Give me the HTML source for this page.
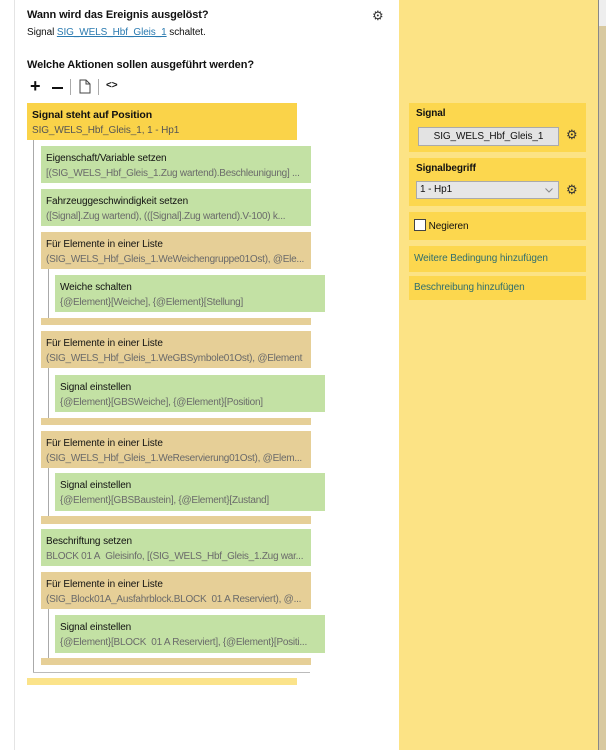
<!DOCTYPE html><html><head><meta charset="utf-8"><style>
body{margin:0;width:606px;height:750px;position:relative;overflow:hidden;background:#fff;font-family:"Liberation Sans",sans-serif;font-size:10px;color:#111;letter-spacing:-0.1px}
.a{position:absolute}
.b{position:absolute;box-sizing:border-box;padding:5px 0 0 5px;line-height:15px;white-space:nowrap;overflow:hidden}
.g{background:#c3e1a4}.t{background:#e6cf97}
.s{color:#6a6a6a;letter-spacing:-0.25px}
.box{position:absolute;left:409px;width:177px;background:#fcd74e;box-sizing:border-box;padding:5px 0 0 7px}
.gear{position:absolute;font-size:13px;color:#333}
</style></head><body>
<div class="a" style="left:14px;top:0;width:1px;height:750px;background:#e4e4e4"></div>
<div class="a" style="left:27px;top:9px;font-weight:bold;font-size:11px">Wann wird das Ereignis ausgelöst?</div>
<div class="a" style="left:27px;top:27px">Signal <span style="color:#2a7ab0;text-decoration:underline">SIG_WELS_Hbf_Gleis_1</span> schaltet.</div>
<div class="gear" style="left:372px;top:8px">⚙</div>
<div class="a" style="left:27px;top:59px;font-weight:bold;font-size:11px">Welche Aktionen sollen ausgeführt werden?</div>
<div class="a" style="left:30px;top:76px;font-size:18px;font-weight:bold">+</div>
<div class="a" style="left:52px;top:87px;width:11px;height:2px;background:#111"></div>
<div class="a" style="left:70px;top:79px;width:1px;height:16px;background:#aaa"></div>
<svg class="a" style="left:79px;top:79px" width="12" height="15"><path d="M1 1H7L11 5V14H1Z M7 1V5H11" fill="none" stroke="#444"/></svg>
<div class="a" style="left:98px;top:79px;width:1px;height:16px;background:#aaa"></div>
<div class="a" style="left:106px;top:80px;font-size:10px;font-weight:bold">&lt;&gt;</div>
<div class="b" style="left:27px;top:103px;width:270px;height:37px;background:#fad349;padding-left:5px"><b style="font-size:10.5px">Signal steht auf Position</b><br><span style="color:#555">SIG_WELS_Hbf_Gleis_1, 1 - Hp1</span></div>
<div class="a" style="left:33px;top:140px;width:1px;height:532px;background:#aaa"></div>
<div class="a" style="left:33px;top:672px;width:277px;height:1px;background:#bbb"></div>
<div class="b g" style="left:41px;top:146px;width:270px;height:37px">Eigenschaft/Variable setzen<br><span class="s">[(SIG_WELS_Hbf_Gleis_1.Zug wartend).Beschleunigung] ...</span></div>
<div class="b g" style="left:41px;top:189px;width:270px;height:37px">Fahrzeuggeschwindigkeit setzen<br><span class="s">([Signal].Zug wartend), (([Signal].Zug wartend).V-100) k...</span></div>
<div class="b t" style="left:41px;top:232px;width:270px;height:37px">Für Elemente in einer Liste<br><span class="s">(SIG_WELS_Hbf_Gleis_1.WeWeichengruppe01Ost), @Ele...</span></div>
<div class="a" style="left:48px;top:269px;width:1px;height:49px;background:#aaa"></div>
<div class="b g" style="left:55px;top:275px;width:270px;height:37px">Weiche schalten<br><span class="s">{@Element}[Weiche], {@Element}[Stellung]</span></div>
<div class="a t" style="left:41px;top:318px;width:270px;height:7px"></div>
<div class="b t" style="left:41px;top:331px;width:270px;height:37px">Für Elemente in einer Liste<br><span class="s">(SIG_WELS_Hbf_Gleis_1.WeGBSymbole01Ost), @Element</span></div>
<div class="a" style="left:48px;top:368px;width:1px;height:50px;background:#aaa"></div>
<div class="b g" style="left:55px;top:375px;width:270px;height:37px">Signal einstellen<br><span class="s">{@Element}[GBSWeiche], {@Element}[Position]</span></div>
<div class="a t" style="left:41px;top:418px;width:270px;height:7px"></div>
<div class="b t" style="left:41px;top:431px;width:270px;height:37px">Für Elemente in einer Liste<br><span class="s">(SIG_WELS_Hbf_Gleis_1.WeReservierung01Ost), @Elem...</span></div>
<div class="a" style="left:48px;top:468px;width:1px;height:48px;background:#aaa"></div>
<div class="b g" style="left:55px;top:473px;width:270px;height:38px">Signal einstellen<br><span class="s">{@Element}[GBSBaustein], {@Element}[Zustand]</span></div>
<div class="a t" style="left:41px;top:516px;width:270px;height:8px"></div>
<div class="b g" style="left:41px;top:529px;width:270px;height:37px">Beschriftung setzen<br><span class="s">BLOCK 01 A&nbsp; Gleisinfo, [(SIG_WELS_Hbf_Gleis_1.Zug war...</span></div>
<div class="b t" style="left:41px;top:572px;width:270px;height:37px">Für Elemente in einer Liste<br><span class="s">(SIG_Block01A_Ausfahrblock.BLOCK&nbsp; 01 A Reserviert), @...</span></div>
<div class="a" style="left:48px;top:609px;width:1px;height:49px;background:#aaa"></div>
<div class="b g" style="left:55px;top:615px;width:270px;height:38px">Signal einstellen<br><span class="s">{@Element}[BLOCK&nbsp; 01 A Reserviert], {@Element}[Positi...</span></div>
<div class="a t" style="left:41px;top:658px;width:270px;height:7px"></div>
<div class="a" style="left:27px;top:678px;width:270px;height:7px;background:#fbe38a"></div>
<div class="a" style="left:399px;top:0;width:199px;height:750px;background:#fce385"></div>
<div class="a" style="left:598px;top:0;width:1px;height:750px;background:#888"></div>
<div class="a" style="left:599px;top:0;width:7px;height:750px;background:#d8c9a0"></div>
<div class="a" style="left:599px;top:0;width:7px;height:26px;background:#eee"></div>
<div class="box" style="top:103px;height:49px"><b>Signal</b></div>
<div class="a" style="left:418px;top:127px;width:141px;height:19px;background:#e3e3e3;border:1px solid #aaa;box-sizing:border-box;text-align:center;line-height:17px">SIG_WELS_Hbf_Gleis_1</div>
<div class="gear" style="left:566px;top:127px">⚙</div>
<div class="box" style="top:158px;height:48px"><b>Signalbegriff</b></div>
<div class="a" style="left:416px;top:181px;width:143px;height:18px;background:#e6e6e6;border:1px solid #aaa;box-sizing:border-box;line-height:16px;padding-left:3px">1 - Hp1<svg style="position:absolute;right:5px;top:6px" width="8" height="5"><path d="M0.5 0.5L4 4L7.5 0.5" fill="none" stroke="#888"/></svg></div>
<div class="gear" style="left:566px;top:182px">⚙</div>
<div class="box" style="top:212px;height:28px;padding:7px 0 0 5px"><span style="display:inline-block;width:10px;height:10px;border:1px solid #444;background:#fff;vertical-align:-2px"></span> Negieren</div>
<div class="box" style="top:246px;height:26px;padding:7px 0 0 5px;color:#2f6e6e">Weitere Bedingung hinzufügen</div>
<div class="box" style="top:276px;height:24px;padding:6px 0 0 5px;color:#2f6e6e">Beschreibung hinzufügen</div>
</body></html>
